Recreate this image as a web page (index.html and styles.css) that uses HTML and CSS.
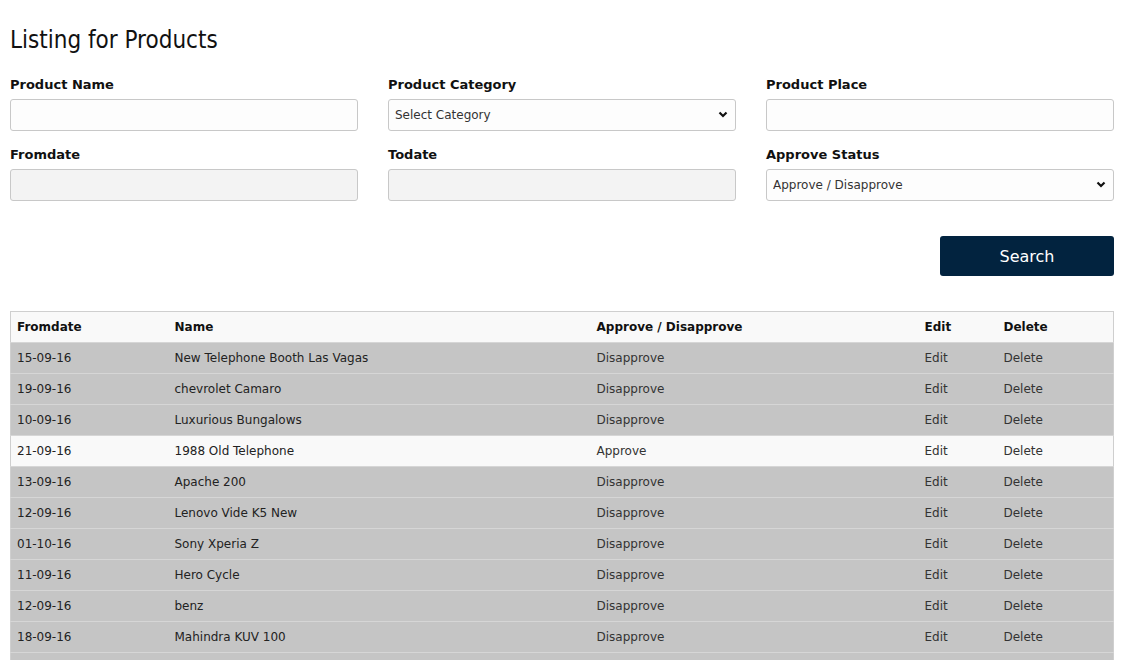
FILE: index.html
```html
<!DOCTYPE html>
<html>
<head>
<meta charset="utf-8">
<title>Listing for Products</title>
<link rel="stylesheet" href="styles.css">
</head>
<body>
<div class="page">
  <h1 class="title">Listing for Products</h1>
  <form class="filters">
    <div class="field">
      <label class="label">Product Name</label>
      <input class="control" type="text">
    </div>
    <div class="field">
      <label class="label">Product Category</label>
      <div class="select-wrap">
        <select class="control select"><option>Select Category</option></select>
        <svg class="chev" width="10" height="7" viewBox="0 0 10 7"><polyline points="1.5,1.5 5,5 8.5,1.5" fill="none" stroke="#111" stroke-width="2.2"/></svg>
      </div>
    </div>
    <div class="field">
      <label class="label">Product Place</label>
      <input class="control" type="text">
    </div>
    <div class="field">
      <label class="label">Fromdate</label>
      <input class="control readonly" type="text" readonly>
    </div>
    <div class="field">
      <label class="label">Todate</label>
      <input class="control readonly" type="text" readonly>
    </div>
    <div class="field">
      <label class="label">Approve Status</label>
      <div class="select-wrap">
        <select class="control select"><option>Approve / Disapprove</option></select>
        <svg class="chev" width="10" height="7" viewBox="0 0 10 7"><polyline points="1.5,1.5 5,5 8.5,1.5" fill="none" stroke="#111" stroke-width="2.2"/></svg>
      </div>
    </div>
  </form>
  <div class="actions">
    <button class="search-btn" type="button">Search</button>
  </div>
  <table class="grid">
    <colgroup>
      <col class="c-date"><col class="c-name"><col class="c-status"><col class="c-edit"><col>
    </colgroup>
    <thead>
      <tr><th>Fromdate</th><th>Name</th><th>Approve / Disapprove</th><th>Edit</th><th>Delete</th></tr>
    </thead>
    <tbody>
      <tr class="off"><td>15-09-16</td><td>New Telephone Booth Las Vagas</td><td class="muted">Disapprove</td><td class="muted">Edit</td><td class="muted">Delete</td></tr>
      <tr class="off"><td>19-09-16</td><td>chevrolet Camaro</td><td class="muted">Disapprove</td><td class="muted">Edit</td><td class="muted">Delete</td></tr>
      <tr class="off"><td>10-09-16</td><td>Luxurious Bungalows</td><td class="muted">Disapprove</td><td class="muted">Edit</td><td class="muted">Delete</td></tr>
      <tr class="on"><td>21-09-16</td><td>1988 Old Telephone</td><td class="muted">Approve</td><td class="muted">Edit</td><td class="muted">Delete</td></tr>
      <tr class="off"><td>13-09-16</td><td>Apache 200</td><td class="muted">Disapprove</td><td class="muted">Edit</td><td class="muted">Delete</td></tr>
      <tr class="off"><td>12-09-16</td><td>Lenovo Vide K5 New</td><td class="muted">Disapprove</td><td class="muted">Edit</td><td class="muted">Delete</td></tr>
      <tr class="off"><td>01-10-16</td><td>Sony Xperia Z</td><td class="muted">Disapprove</td><td class="muted">Edit</td><td class="muted">Delete</td></tr>
      <tr class="off"><td>11-09-16</td><td>Hero Cycle</td><td class="muted">Disapprove</td><td class="muted">Edit</td><td class="muted">Delete</td></tr>
      <tr class="off"><td>12-09-16</td><td>benz</td><td class="muted">Disapprove</td><td class="muted">Edit</td><td class="muted">Delete</td></tr>
      <tr class="off"><td>18-09-16</td><td>Mahindra KUV 100</td><td class="muted">Disapprove</td><td class="muted">Edit</td><td class="muted">Delete</td></tr>
      <tr class="off"><td></td><td></td><td></td><td></td><td></td></tr>
    </tbody>
  </table>
</div>
</body>
</html>
```

FILE: styles.css
```css
html, body {
  margin: 0;
  padding: 0;
  background: #ffffff;
}

body {
  font-family: "DejaVu Sans", Verdana, sans-serif;
  color: #111;
}

.page {
  padding: 0 17px 0 10px;
}

.title {
  font-family: "DejaVu Sans", sans-serif;
  font-stretch: condensed;
  font-weight: normal;
  font-size: 24px;
  line-height: 30px;
  margin: 25px 0 22px 0;
  color: #111;
}

.filters {
  display: grid;
  grid-template-columns: repeat(3, 1fr);
  column-gap: 30px;
  row-gap: 16px;
  margin: 0;
}

.field {
  display: flex;
  flex-direction: column;
}

.label {
  font-size: 13px;
  font-weight: bold;
  line-height: 16px;
  margin-bottom: 6px;
  color: #111;
}

.control {
  box-sizing: border-box;
  height: 32px;
  width: 100%;
  border: 1px solid #c8c8c8;
  border-radius: 3px;
  background-color: #fdfdfd;
  font-family: "DejaVu Sans", Verdana, sans-serif;
  font-size: 12px;
  color: #333;
  padding: 0 6px;
  margin: 0;
}

.readonly {
  background-color: #f3f3f3;
}

.select-wrap {
  position: relative;
}

.select {
  display: block;
  -webkit-appearance: none;
  appearance: none;
  padding-left: 6px;
  padding-right: 24px;
}

.chev {
  position: absolute;
  right: 8px;
  top: 12px;
  pointer-events: none;
}

.actions {
  display: flex;
  justify-content: flex-end;
  margin-top: 35px;
}

.search-btn {
  width: 174px;
  height: 40px;
  background: #02233f;
  color: #ffffff;
  border: none;
  border-radius: 3px;
  font-family: "DejaVu Sans", Verdana, sans-serif;
  font-size: 16px;
  padding: 0;
}

.grid {
  margin-top: 35px;
  width: 100%;
  border-collapse: collapse;
  table-layout: fixed;
  border: 1px solid #cfcfcf;
  font-size: 12px;
}

.c-date { width: 158px; }
.c-name { width: 422px; }
.c-status { width: 328px; }
.c-edit { width: 79px; }

.grid th,
.grid td {
  text-align: left;
  height: 30px;
  padding: 0 6px;
  white-space: nowrap;
  overflow: hidden;
}

.grid th {
  font-weight: bold;
  background: #f9f9f9;
  color: #111;
}

.grid td {
  border-top: 1px solid #d6d6d6;
  color: #222;
}

.grid tr.off td {
  background: #c5c5c5;
}

.grid tr.on td {
  background: #f9f9f9;
}

.grid td.muted {
  color: #333;
}
```
